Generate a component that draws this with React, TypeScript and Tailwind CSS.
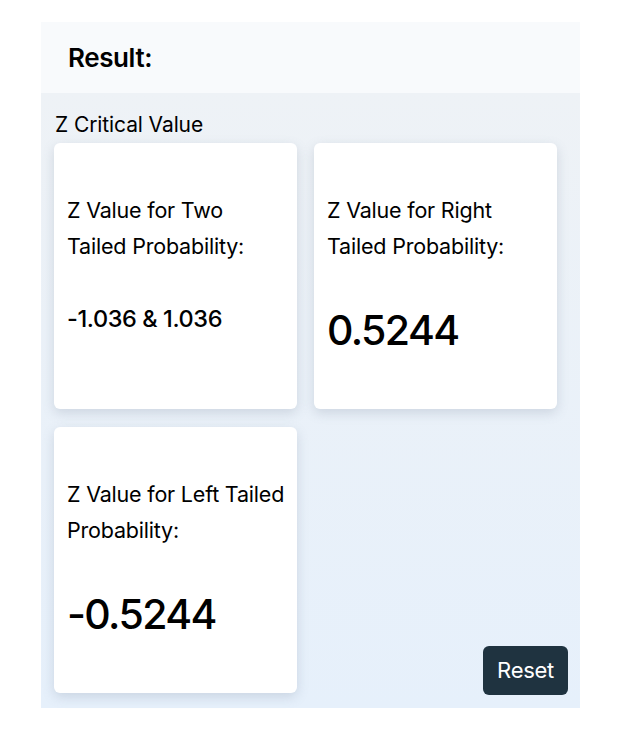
import React from "react";

type Item = {
  label: string;
  value: string;
  big: boolean;
};

const items: Item[] = [
  { label: "Z Value for Two Tailed Probability:", value: "-1.036 & 1.036", big: false },
  { label: "Z Value for Right Tailed Probability:", value: "0.5244", big: true },
  { label: "Z Value for Left Tailed Probability:", value: "-0.5244", big: true },
];

function ResultCard({ item }: { item: Item }) {
  return (
    <div className="w-[243px] h-[266px] shrink-0 rounded-md bg-white pl-[13px] pr-[11px] pt-[49px] shadow-[0_4px_12px_rgba(100,116,139,0.22)]">
      <p className="text-[21.5px] leading-[36px] tracking-[-0.2px] text-black">{item.label}</p>
      {item.big ? (
        <p className="mt-[42px] text-[41px] leading-[48px] font-medium tracking-[-1.6px] text-black">{item.value}</p>
      ) : (
        <p className="mt-[42px] text-[23.5px] leading-[26px] font-medium tracking-[-0.4px] text-black">{item.value}</p>
      )}
    </div>
  );
}

export default function App() {
  return (
    <div className="min-h-screen bg-white pt-[22px] font-['Inter',sans-serif]">
      <div className="ml-[41px] w-[539px]">
        {/* header */}
        <div className="h-[71px] flex items-center bg-[#f8fafc] px-[27px]">
          <h2 className="text-[26px] font-semibold text-black tracking-[-0.4px]">Result:</h2>
        </div>

        {/* body */}
        <div className="bg-gradient-to-b from-[#eef2f6] to-[#e6f0fb] pl-[13px] pr-[12px] pt-[18px] pb-[15px]">
          <p className="pl-[1px] text-[21px] leading-[28px] tracking-[-0.1px] text-black">Z Critical Value</p>
          <div className="mt-[4px] flex gap-[17px]">
            <ResultCard item={items[0]} />
            <ResultCard item={items[1]} />
          </div>
          <div className="mt-[18px] flex gap-[17px]">
            <ResultCard item={items[2]} />
            <div className="flex flex-1 items-end justify-end">
              <button className="-mb-[2px] h-[49px] w-[85px] rounded-md bg-[#1f3340] text-[22px] tracking-[-0.3px] text-white">
                Reset
              </button>
            </div>
          </div>
        </div>
      </div>
    </div>
  );
}
